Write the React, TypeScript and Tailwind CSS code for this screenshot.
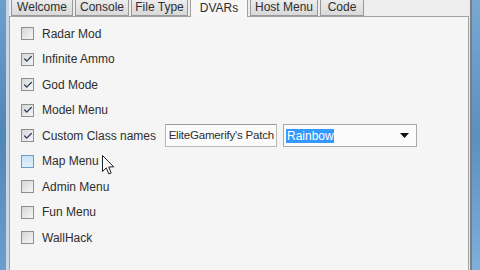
import { Check } from "lucide-react";

const tabs = [
  { name: "Welcome", w: "w-[62px]" },
  { name: "Console", w: "w-[54px]" },
  { name: "File Type", w: "w-[57px]" },
  { name: "DVARs", w: "w-[58px]", active: true },
  { name: "Host Menu", w: "w-[68px]" },
  { name: "Code", w: "w-[44px]" },
];

const options = [
  { label: "Radar Mod", checked: false },
  { label: "Infinite Ammo", checked: true },
  { label: "God Mode", checked: true },
  { label: "Model Menu", checked: true },
  { label: "Custom Class names", checked: true, extra: true },
  { label: "Map Menu", checked: false, hover: true },
  { label: "Admin Menu", checked: false },
  { label: "Fun Menu", checked: false },
  { label: "WallHack", checked: false },
];

function CheckBox({ checked, hover }: { checked: boolean; hover?: boolean }) {
  return (
    <div
      className={`w-[13px] h-[13px] border flex items-center justify-center ${
        hover
          ? "border-[#6a9cc8] bg-gradient-to-b from-[#c9e3f5] to-[#dff0fb]"
          : "border-[#8e8f8f] bg-gradient-to-br from-[#d6d6d6] to-[#f6f6f6]"
      }`}
    >
      {checked && <Check className="w-[10px] h-[10px] text-[#2a3a5a]" strokeWidth={3} />}
    </div>
  );
}

export default function App() {
  return (
    <div
      className="relative w-[480px] h-[270px] flex bg-[#ededed] text-[#2e2e2e] text-[12px] overflow-hidden"
      style={{ fontFamily: '"Liberation Sans", Arial, sans-serif' }}
    >
      {/* Left window frame */}
      <div className="w-[6px] h-full bg-gradient-to-b from-[#6d9fcc] via-[#4f86b8] to-[#6b9ecb]" />
      <div className="w-[3px] h-full bg-[#c9d6e3]" />

      {/* Main area */}
      <div className="w-[460px] h-full flex flex-col">
        {/* Tab strip */}
        <div className="h-[16px] flex items-end gap-[2px] pl-[2px]">
          {tabs.map((t) =>
            t.active ? (
              <div
                key={t.name}
                className={`${t.w} h-[17px] -mb-[1px] bg-[#f7f7f7] border-x border-[#a0a0a0] flex items-start justify-center pt-[1px] relative z-10 leading-[14px]`}
              >
                {t.name}
              </div>
            ) : (
              <div
                key={t.name}
                className={`${t.w} h-[16px] bg-gradient-to-b from-[#ececec] to-[#d9d9d9] border border-t-0 border-[#9a9a9a] flex items-start justify-center pt-[1px] leading-[13px]`}
              >
                {t.name}
              </div>
            )
          )}
        </div>

        {/* Panel */}
        <div className="flex-1 border border-b-0 border-[#a3a3a3] bg-[#f5f5f5] pt-[4px] pl-[11px]">
          {options.map((o) => (
            <div key={o.label} className="h-[25.5px] flex items-center">
              <CheckBox checked={o.checked} hover={o.hover} />
              <span className={`ml-[8px] ${o.extra ? "w-[123px]" : ""}`}>{o.label}</span>
              {o.extra && (
                <div className="flex items-center gap-[6px]">
                  <div className="w-[112px] h-[23px] border border-[#b8b8b8] border-t-[#9c9c9c] bg-[#fbfbfb] overflow-hidden flex justify-end items-center pr-[2px]">
                    <span className="whitespace-nowrap text-[11.5px] tracking-[-0.2px]">EliteGamerify's Patch</span>
                  </div>
                  <div className="w-[134px] h-[23px] border border-[#a9a9a9] bg-[#fbfbfb] flex items-center px-[2px]">
                    <span className="bg-[#3399ff] text-white px-[1px] leading-[14px] w-[48px]">Rainbow</span>
                    <div className="flex-1" />
                    <svg width="9" height="5" viewBox="0 0 9 5" className="mr-[5px]">
                      <path d="M0 0 H9 L4.5 5 Z" fill="#111" />
                    </svg>
                  </div>
                </div>
              )}
            </div>
          ))}
        </div>
      </div>

      {/* Right window frame */}
      <div className="w-[1px] h-full bg-[#e8e8e8]" />
      <div className="w-[2px] h-full bg-[#7a7f86]" />
      <div className="flex-1 h-full bg-gradient-to-b from-[#7aa8d2] via-[#5b8fbf] to-[#7fb0da]" />

      {/* Mouse cursor */}
      <svg
        className="absolute left-[102px] top-[155px]"
        width="13"
        height="21"
        viewBox="0 0 13 21"
      >
        <path
          d="M0.5 0.5 L0.5 16.5 L4.3 12.8 L6.8 19 L9.2 18 L6.7 11.9 L11.8 11.9 Z"
          fill="#fff"
          stroke="#222"
          strokeWidth="1"
          strokeLinejoin="round"
        />
      </svg>
    </div>
  );
}
